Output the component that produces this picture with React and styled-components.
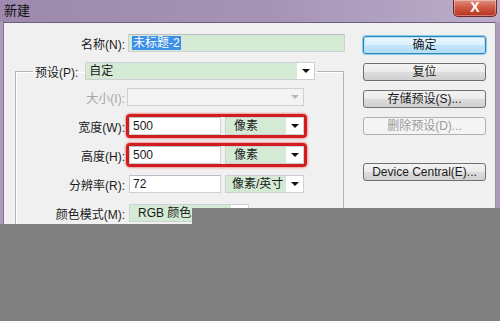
import React from 'react';
import styled, { createGlobalStyle, css } from 'styled-components';

const GlobalStyle = createGlobalStyle`
  html, body {
    margin: 0;
    padding: 0;
  }
  body {
    width: 500px;
    height: 321px;
    overflow: hidden;
    font-family: "Liberation Sans", "Noto Sans CJK SC", sans-serif;
    font-size: 12px;
    color: #1b1b1b;
  }
`;

const Window = styled.div`
  position: relative;
  width: 500px;
  height: 321px;
  display: flex;
  flex-direction: column;
  background: #ab9cbb;
  overflow: hidden;
`;

const TitleBar = styled.div`
  height: 22px;
  flex: none;
  display: flex;
  justify-content: space-between;
  padding-left: 4px;
  background: linear-gradient(90deg, #9c89ad 0%, #a694b6 55%, #bcaecb 100%);
`;

const Title = styled.span`
  font-size: 13px;
  line-height: 22px;
  color: #111;
`;

const CloseButton = styled.div`
  width: 44px;
  height: 17px;
  margin-right: 3px;
  box-sizing: border-box;
  border: 1px solid #6e2a24;
  border-top: none;
  border-radius: 0 0 5px 5px;
  background: linear-gradient(#e1907f 0%, #cf5a47 45%, #b8321f 100%);
  color: #fff;
  font-weight: bold;
  font-size: 14px;
  line-height: 15px;
  text-align: center;
  box-shadow: inset 0 0 0 1px rgba(255, 255, 255, 0.35);
`;

const Frame = styled.div`
  flex: 1;
  display: flex;
  padding: 0 4px 0 3px;
`;

const Body = styled.div`
  flex: 1;
  display: flex;
  background: #f0f0f0;
  border-top: 1px solid #6c5f7c;
  border-left: 1px solid #7d7288;
  border-right: 1px solid #9a90a5;
  padding-top: 11px;
`;

const LeftCol = styled.div`
  width: 341px;
  display: flex;
  flex-direction: column;
`;

const NameRow = styled.div`
  display: grid;
  grid-template-columns: 121px 217px;
  column-gap: 3px;
  align-items: center;
`;

const Label = styled.label`
  text-align: right;
  white-space: nowrap;
  color: ${p => (p.disabled ? '#a6a6a6' : '#1b1b1b')};
`;

const TextInput = styled.div`
  height: 18px;
  width: ${p => p.width || 'auto'};
  box-sizing: border-box;
  border: 1px solid #cdd1d6;
  border-top-color: #b9bec4;
  background: ${p => (p.green ? '#d4ead4' : '#fff')};
  padding-left: 3px;
  line-height: 16px;
  white-space: nowrap;
  overflow: hidden;
`;

const Selected = styled.span`
  background: #3d8ee6;
  color: #fff;
  padding: 0 1px;
`;

const GroupBox = styled.fieldset`
  margin: 10px 0 0 11px;
  width: 329px;
  box-sizing: border-box;
  border: 1px solid #b4b4b4;
  box-shadow: inset 1px 1px 0 #fff;
  padding: 5px 0 0 0;
  display: flex;
  flex-direction: column;
  gap: 5px;
`;

const Legend = styled.legend`
  margin-left: 17px;
  padding: 0 2px;
  display: flex;
  align-items: center;
  gap: 7px;
`;

const Select = styled.div`
  width: ${p => p.width};
  height: 18px;
  box-sizing: border-box;
  display: flex;
  border: 1px solid ${p => (p.disabled ? '#cfcfcf' : '#cdd1d6')};
  background: ${p => (p.disabled ? '#f4f4f4' : '#fff')};
`;

const SelectText = styled.div`
  flex: 1;
  padding-left: ${p => (p.pad === undefined ? 8 : p.pad)}px;
  line-height: 16px;
  white-space: nowrap;
  overflow: hidden;
  background: ${p => (p.disabled ? 'transparent' : '#d4ead4')};
`;

const Arrow = styled.div`
  width: 17px;
  flex: none;
  display: flex;
  align-items: center;
  justify-content: center;
  &::after {
    content: '';
    border-left: 4px solid transparent;
    border-right: 4px solid transparent;
    border-top: 4px solid ${p => (p.disabled ? '#b8b8b8' : '#111')};
  }
`;

const Row = styled.div`
  height: 24px;
  display: grid;
  grid-template-columns: 109px auto;
  column-gap: 1px;
  align-items: center;
`;

const ControlBox = styled.div`
  width: 181px;
  height: 24px;
  box-sizing: border-box;
  display: flex;
  align-items: center;
  gap: 4px;
  border: 3px solid transparent;
  border-radius: 4px;
  ${p =>
    p.highlight &&
    css`
      border-color: #d11d1d;
      box-shadow: 0 0 2px 1px rgba(230, 90, 90, 0.55);
    `}
`;

const RightCol = styled.div`
  margin-left: 18px;
  padding-top: 2px;
  display: flex;
  flex-direction: column;
  gap: 9px;
`;

const Button = styled.div`
  width: 123px;
  height: 18px;
  box-sizing: border-box;
  border: 1px solid #707070;
  border-radius: 3px;
  background: linear-gradient(#f3f3f3 0%, #ebebeb 50%, #dddddd 51%, #d0d0d0 100%);
  text-align: center;
  line-height: 16px;
  white-space: nowrap;
  margin-top: ${p => p.gapTop || 0}px;
  ${p =>
    p.primary &&
    css`
      border-color: #3c7fb1;
      background: linear-gradient(#ecf7fd 0%, #dcf0fc 50%, #c4e6fb 51%, #b4dcf5 100%);
      box-shadow: 0 0 0 1px #7fd0f3, inset 0 0 0 1px #aee3fa;
    `}
  ${p =>
    p.disabled &&
    css`
      border-color: #adb2b5;
      background: #f4f4f4;
      color: #9a9a9a;
    `}
`;

const Cover = styled.div`
  position: absolute;
  background: #808080;
  left: ${p => p.left}px;
  top: ${p => p.top}px;
  right: 0;
  bottom: ${p => (p.bottom === undefined ? 0 : p.bottom)}px;
`;

const SizeRow = ({ label, value, unit, highlight }) => (
  <Row>
    <Label>{label}</Label>
    <ControlBox highlight={highlight}>
      <TextInput width="92px">{value}</TextInput>
      <Select width="79px">
        <SelectText pad={unit.length > 2 ? 6 : 8}>{unit}</SelectText>
        <Arrow />
      </Select>
    </ControlBox>
  </Row>
);

export default function App() {
  return (
    <>
      <GlobalStyle />
      <Window>
        <TitleBar>
          <Title>新建</Title>
          <CloseButton>X</CloseButton>
        </TitleBar>
        <Frame>
          <Body>
            <LeftCol>
              <NameRow>
                <Label>名称(N):</Label>
                <TextInput green>
                  <Selected>未标题-2</Selected>
                </TextInput>
              </NameRow>
              <GroupBox>
                <Legend>
                  <Label>预设(P):</Label>
                  <Select width="230px">
                    <SelectText pad={3}>自定</SelectText>
                    <Arrow />
                  </Select>
                </Legend>
                <Row>
                  <Label disabled>大小(I):</Label>
                  <ControlBox>
                    <Select width="178px" disabled style={{ marginLeft: -2 }}>
                      <SelectText disabled />
                      <Arrow disabled />
                    </Select>
                  </ControlBox>
                </Row>
                <SizeRow label="宽度(W):" value="500" unit="像素" highlight />
                <SizeRow label="高度(H):" value="500" unit="像素" highlight />
                <SizeRow label="分辨率(R):" value="72" unit="像素/英寸" />
                <Row>
                  <Label>颜色模式(M):</Label>
                  <ControlBox>
                    <Select width="120px">
                      <SelectText>RGB 颜色</SelectText>
                      <Arrow />
                    </Select>
                  </ControlBox>
                </Row>
              </GroupBox>
            </LeftCol>
            <RightCol>
              <Button primary>确定</Button>
              <Button>复位</Button>
              <Button>存储预设(S)...</Button>
              <Button disabled>删除预设(D)...</Button>
              <Button gapTop={19}>Device Central(E)...</Button>
            </RightCol>
          </Body>
        </Frame>
        <Cover left={192} top={208} bottom={97} />
        <Cover left={0} top={224} />
      </Window>
    </>
  );
}
